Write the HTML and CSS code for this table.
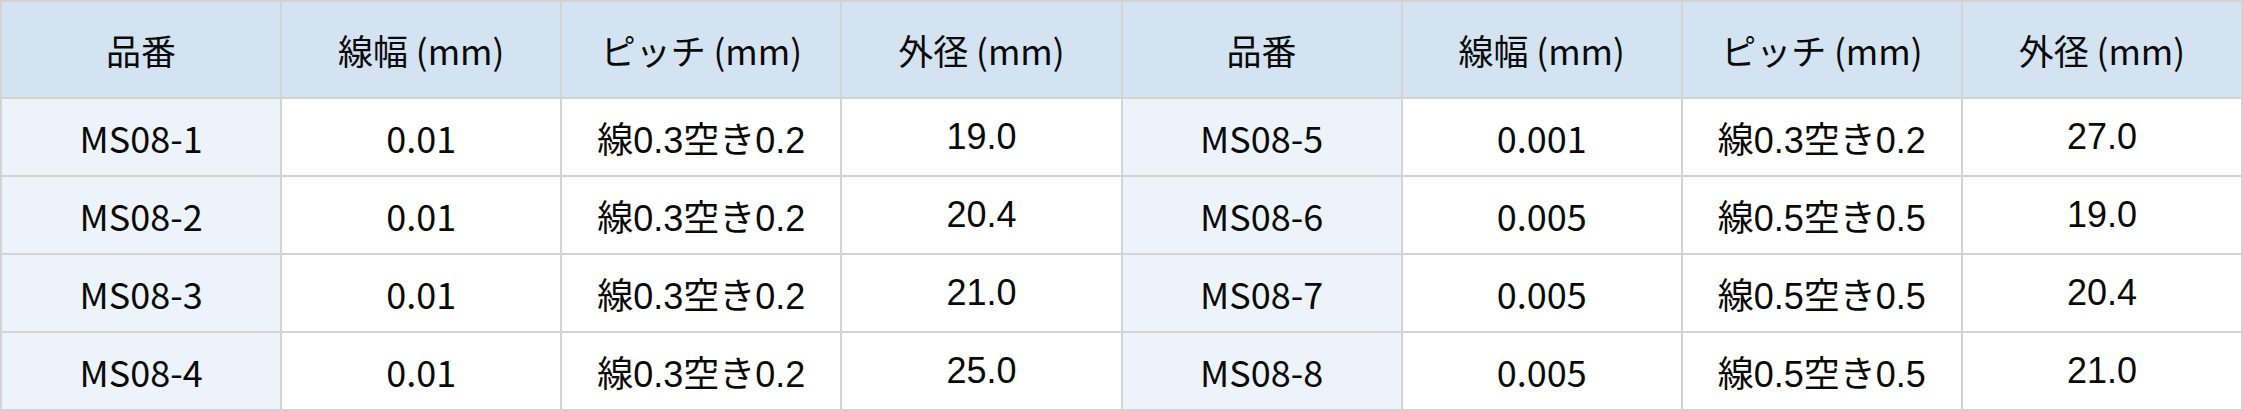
FILE: index.html
```html
<!DOCTYPE html>
<html lang="ja">
<head>
<meta charset="utf-8">
<title>MS08</title>
<link rel="stylesheet" href="styles.css">
</head>
<body>
<table class="spec">
  <thead>
    <tr>
      <th>品番</th><th>線幅 (mm)</th><th>ピッチ (mm)</th><th>外径 (mm)</th>
      <th>品番</th><th>線幅 (mm)</th><th>ピッチ (mm)</th><th>外径 (mm)</th>
    </tr>
  </thead>
  <tbody>
    <tr>
      <td class="code">MS08-1</td><td class="num">0.01</td><td class="alt">線0.3空き0.2</td><td class="alt">19.0</td>
      <td class="code">MS08-5</td><td class="num">0.001</td><td class="alt">線0.3空き0.2</td><td class="alt">27.0</td>
    </tr>
    <tr>
      <td class="code">MS08-2</td><td class="num">0.01</td><td class="alt">線0.3空き0.2</td><td class="alt">20.4</td>
      <td class="code">MS08-6</td><td class="num">0.005</td><td class="alt">線0.5空き0.5</td><td class="alt">19.0</td>
    </tr>
    <tr>
      <td class="code">MS08-3</td><td class="num">0.01</td><td class="alt">線0.3空き0.2</td><td class="alt">21.0</td>
      <td class="code">MS08-7</td><td class="num">0.005</td><td class="alt">線0.5空き0.5</td><td class="alt">20.4</td>
    </tr>
    <tr>
      <td class="code">MS08-4</td><td class="num">0.01</td><td class="alt">線0.3空き0.2</td><td class="alt">25.0</td>
      <td class="code">MS08-8</td><td class="num">0.005</td><td class="alt">線0.5空き0.5</td><td class="alt">21.0</td>
    </tr>
  </tbody>
</table>
</body>
</html>
```
FILE: styles.css
```css
html, body {
  margin: 0;
  padding: 0;
  background: #ffffff;
}
.spec {
  width: 2243px;
  table-layout: fixed;
  border-collapse: collapse;
  font-family: "Noto Sans CJK JP", "Noto Sans", sans-serif;
  color: #0a0a0a;
}
.spec th, .spec td {
  border: 2px solid #d3d3d3;
  text-align: center;
  vertical-align: middle;
  padding: 0;
  font-weight: 400;
}
.spec th {
  background: #d3e3f2;
  height: 95px;
  font-size: 35px;
}
.spec td {
  height: 76px;
  background: #ffffff;
  font-size: 36px;
}
.spec td.code {
  background: #edf3fa;
}
.spec td.alt {
  font-family: "Liberation Sans", "Noto Sans CJK JP", sans-serif;
}
```
